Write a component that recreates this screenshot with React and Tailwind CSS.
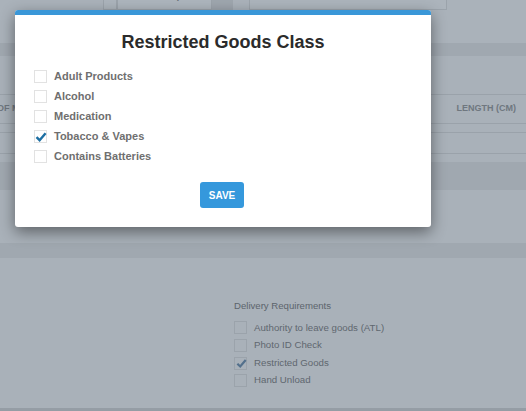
import React from "react";

const goods = [
  { label: "Adult Products", checked: false },
  { label: "Alcohol", checked: false },
  { label: "Medication", checked: false },
  { label: "Tobacco & Vapes", checked: true },
  { label: "Contains Batteries", checked: false },
];

const delivery = [
  { label: "Authority to leave goods (ATL)", checked: false },
  { label: "Photo ID Check", checked: false },
  { label: "Restricted Goods", checked: true },
  { label: "Hand Unload", checked: false },
];

function Tick({ className }) {
  return (
    <svg viewBox="0 0 12 12" className={className} fill="none">
      <path d="M1.5 6.2 L4.6 9.2 L10.6 2.2" stroke="currentColor" strokeWidth="2.4" />
    </svg>
  );
}

export default function App() {
  return (
    <div
      className="relative w-[526px] h-[411px] overflow-hidden bg-[#a9b1b9] flex flex-col"
      style={{ fontFamily: '"Liberation Sans", Arial, sans-serif' }}
    >
      {/* dimmed page behind the modal */}
      <div className="h-[43px] shrink-0 bg-[#aab2ba] flex flex-col">
        <div className="flex items-stretch h-[24px] mt-[-14px]">
          <div className="w-[103px]" />
          <div className="w-[14px] border border-[#9ba3ab] bg-[#acb4bc]" />
          <div className="w-[95px] border border-[#9ba3ab] bg-[#adb5bd] pl-2 text-[10px] font-bold text-[#6b737b] flex items-end pb-[6px]">
            Return Shipment
          </div>
          <div className="w-[21px] bg-[#9ea6ae]" />
          <div className="w-[16px]" />
          <div className="w-[198px] border border-[#9ba3ab] bg-[#acb4bc] pl-4 text-[10px] text-[#8a929a] flex items-end pb-[6px]">
            Add Reference
          </div>
        </div>
      </div>
      <div className="h-[13px] shrink-0 bg-[#a0a8b0]" />
      <div className="h-[39px] shrink-0 border-b border-[#9aa2aa]" />
      <div className="h-[28px] shrink-0 flex items-center justify-between text-[9px] font-bold text-[#6f777f]">
        <span className="-ml-[3px]">OF ME</span>
        <span className="mr-[10px]">LENGTH (CM)</span>
      </div>
      <div className="h-[9px] shrink-0 border-t border-[#9aa2aa]" />
      <div className="h-[21px] shrink-0 border-t border-[#9aa2aa]" />
      <div className="h-[9px] shrink-0 border-t border-[#9aa2aa]" />
      <div className="h-[28px] shrink-0 bg-[#a0a8b0]" />
      <div className="h-[53px] shrink-0" />
      <div className="h-[15px] shrink-0 bg-[#a0a8b0]" />
      <div className="h-[150px] shrink-0 pl-[234px] pt-[41px]">
        <div className="text-[9.6px] text-[#5c646c]">Delivery Requirements</div>
        <div className="mt-[8px] flex flex-col gap-[4.6px]">
          {delivery.map((d) => (
            <div key={d.label} className="flex items-center h-[13px]">
              <div className="relative w-[13px] h-[13px] border border-[#9ba3ab]">
                {d.checked && (
                  <Tick className="absolute left-[1px] top-[0px] w-[11px] h-[11px] text-[#53708c]" />
                )}
              </div>
              <span className="ml-[7px] text-[9.7px] text-[#5f676f]">{d.label}</span>
            </div>
          ))}
        </div>
      </div>
      <div className="h-[3px] shrink-0 bg-[#959da5]" />

      {/* modal */}
      <div className="absolute left-[15px] top-[10px] w-[416px] h-[217px] bg-white rounded-[3px] overflow-hidden shadow-[0_5px_15px_rgba(0,0,0,0.45)]">
        <div className="h-[5px] bg-[#3a97d8]" />
        <div className="pt-[17px] text-center text-[18px] font-bold text-[#2b2b2b] leading-[20px]">
          Restricted Goods Class
        </div>
        <div className="mt-[18px] pl-[19px] flex flex-col gap-[7px]">
          {goods.map((g) => (
            <div key={g.label} className="flex items-center h-[13px]">
              <div className="relative w-[13px] h-[13px] border border-[#e2e2e2]">
                {g.checked && (
                  <Tick className="absolute left-[0px] top-[0px] w-[12px] h-[12px] text-[#1d6fa3]" />
                )}
              </div>
              <span className="ml-[7px] text-[11px] font-bold text-[#6f6f6f]">{g.label}</span>
            </div>
          ))}
        </div>
        <div className="mt-[19px] flex justify-center">
          <button className="w-[44px] h-[26px] rounded-[3px] bg-[#3598dc] text-white text-[10px] font-bold -ml-[2px]">
            SAVE
          </button>
        </div>
      </div>
    </div>
  );
}
